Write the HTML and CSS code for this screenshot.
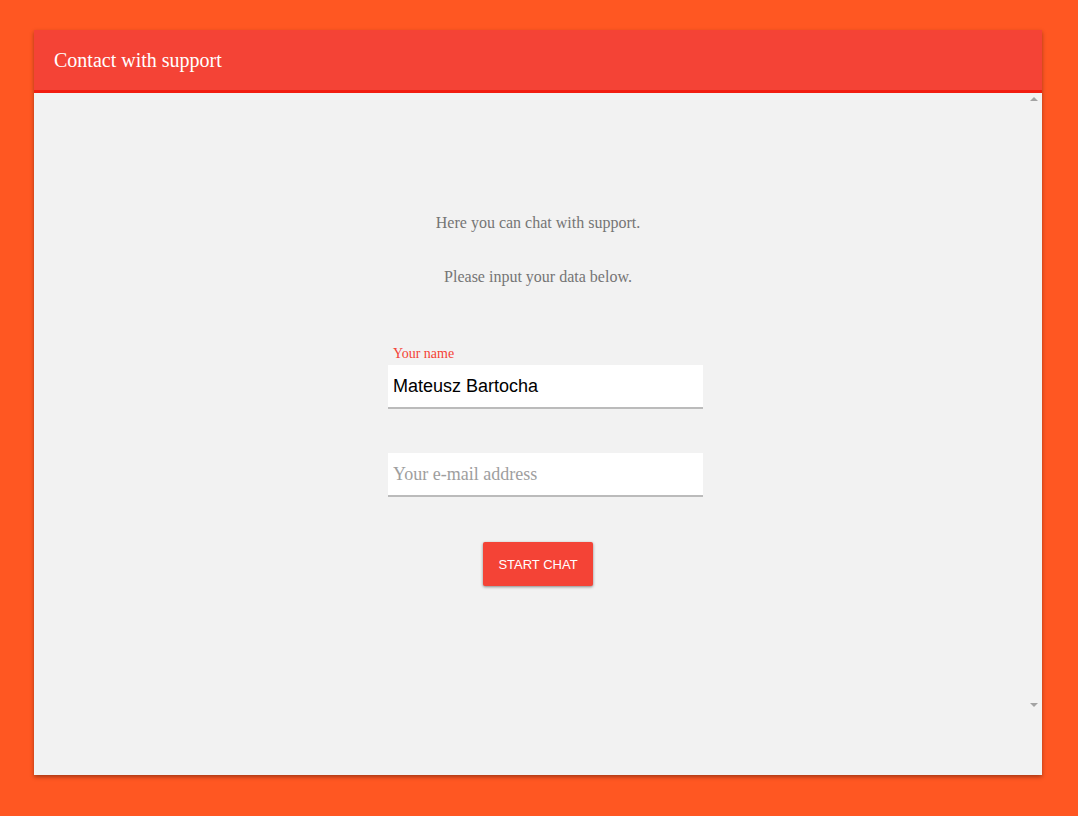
FILE: index.html
```html
<!DOCTYPE html>
<html>
<head>
<meta charset="utf-8">
<link rel="stylesheet" href="styles.css">
</head>
<body>
<div class="page">
  <div class="panel">
    <div class="header">Contact with support</div>
    <div class="content">
      <div class="scroll-up"></div>
      <div class="scroll-down"></div>
      <p class="intro">Here you can chat with support.</p>
      <p class="intro second">Please input your data below.</p>
      <div class="field">
        <label class="label">Your name</label>
        <input class="input filled" type="text" value="Mateusz Bartocha">
      </div>
      <div class="field">
        <input class="input" type="text" placeholder="Your e-mail address">
      </div>
      <button class="btn">START CHAT</button>
    </div>
  </div>
</div>
</body>
</html>
```

FILE: styles.css
```css
html, body {
  margin: 0;
  padding: 0;
  height: 100%;
}
body {
  background: #ff5722;
  font-family: "Liberation Serif", serif;
}
.page {
  box-sizing: border-box;
  height: 816px;
  padding: 30px 36px 41px 34px;
  display: flex;
}
.panel {
  flex: 1;
  display: flex;
  flex-direction: column;
  background: #f2f2f2;
  box-shadow: 0 2px 4px rgba(0,0,0,0.35);
}
.header {
  box-sizing: border-box;
  height: 63px;
  background: #f44336;
  border-bottom: 3px solid #f21d10;
  color: #fff;
  font-size: 20px;
  padding: 0 20px;
  display: flex;
  align-items: center;
}
.content {
  position: relative;
  flex: 1;
  display: flex;
  flex-direction: column;
  align-items: center;
  padding-top: 121px;
}
.scroll-up, .scroll-down {
  position: absolute;
  right: 4px;
  width: 0;
  height: 0;
  border-left: 4px solid transparent;
  border-right: 4px solid transparent;
}
.scroll-up {
  top: 4px;
  border-bottom: 4px solid #a3a3a3;
}
.scroll-down {
  top: 610px;
  border-top: 4px solid #a3a3a3;
}
.intro {
  margin: 0;
  font-size: 16px;
  line-height: 18px;
  color: #757575;
}
.intro.second {
  margin-top: 36px;
  margin-bottom: 60px;
}
.field {
  width: 315px;
  display: flex;
  flex-direction: column;
  margin: 0 0 44px 15px;
}
.label {
  font-size: 14px;
  line-height: 16px;
  color: #f44336;
  padding-left: 5px;
  margin-bottom: 3px;
}
.input {
  box-sizing: border-box;
  height: 44px;
  width: 315px;
  border: none;
  border-bottom: 2px solid #bbbbbb;
  background: #fff;
  padding: 0 5px;
  margin: 0;
  outline: none;
  font-family: "Liberation Serif", serif;
  font-size: 18px;
  color: #000;
}
.input.filled {
  font-family: "Liberation Sans", Arial, sans-serif;
}
.input::placeholder {
  color: #9e9e9e;
}
.btn {
  margin-top: 1px;
  width: 110px;
  height: 44px;
  border: none;
  border-radius: 2px;
  background: #f44336;
  color: #fff;
  font-family: "Liberation Sans", Arial, sans-serif;
  font-size: 13px;
  box-shadow: 0 1px 3px rgba(0,0,0,0.45);
  cursor: pointer;
}
```
